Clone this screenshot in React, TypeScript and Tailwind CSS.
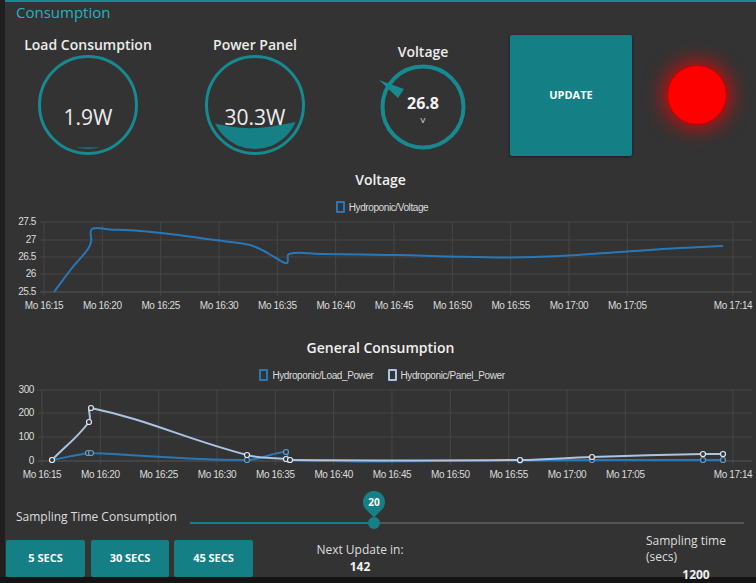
import React from 'react';

type Pt = [number, number];

// chart.js style spline (tension 0.4)
const spline = (pts: Pt[], tension = 0.4) => {
  const cps = pts.map((p, i) => {
    const p0 = pts[i - 1] || p;
    const p2 = pts[i + 1] || p;
    const d01 = Math.hypot(p[0] - p0[0], p[1] - p0[1]);
    const d12 = Math.hypot(p2[0] - p[0], p2[1] - p[1]);
    const sum = d01 + d12 || 1;
    const fa = (tension * d01) / sum;
    const fb = (tension * d12) / sum;
    return {
      prev: [p[0] - fa * (p2[0] - p0[0]), p[1] - fa * (p2[1] - p0[1])],
      next: [p[0] + fb * (p2[0] - p0[0]), p[1] + fb * (p2[1] - p0[1])],
    };
  });
  let d = `M${pts[0][0]},${pts[0][1]}`;
  for (let i = 0; i < pts.length - 1; i++) {
    const a = cps[i].next;
    const b = cps[i + 1].prev;
    const p = pts[i + 1];
    d += ` C${a[0].toFixed(1)},${a[1].toFixed(1)} ${b[0].toFixed(1)},${b[1].toFixed(1)} ${p[0]},${p[1]}`;
  }
  return d;
};

const timeLabels = [
  'Mo 16:15',
  'Mo 16:20',
  'Mo 16:25',
  'Mo 16:30',
  'Mo 16:35',
  'Mo 16:40',
  'Mo 16:45',
  'Mo 16:50',
  'Mo 16:55',
  'Mo 17:00',
  'Mo 17:05',
];

const voltagePts: Pt[] = [
  [54, 292], [72, 268], [88, 249], [91, 242], [92, 229], [110, 229.5], [140, 231],
  [170, 234], [200, 238], [230, 242], [250, 245], [262, 250], [276, 258], [287, 263],
  [289, 254], [320, 254], [360, 254.5], [400, 255], [450, 256.5], [512, 257.5],
  [560, 256], [620, 252], [680, 248], [723, 246],
];

const panelPts: Pt[] = [
  [52, 460], [89, 422], [91, 408], [247, 455], [286, 459], [290, 460], [520, 460],
  [592, 457], [703, 454], [723, 454],
];

const loadPts: Pt[] = [
  [52, 460], [88, 453], [91, 453], [247, 460], [286, 452], [289, 460], [520, 460.5],
  [592, 460], [703, 460], [723, 460],
];

const chartFont = "'Liberation Sans', Arial, sans-serif";

const Grid = ({ x0, ys }: { x0: number; ys: number[] }) => (
  <g>
    {ys.map((y, i) => (
      <line key={y} x1={x0 - 4} x2={752} y1={y} y2={y} stroke={i === ys.length - 1 ? '#575757' : '#464646'} strokeWidth={1} />
    ))}
    {timeLabels.map((_, i) => (
      <line key={i} x1={x0 + i * 58.33} x2={x0 + i * 58.33} y1={ys[0]} y2={ys[ys.length - 1] + 4} stroke="#464646" strokeWidth={1} />
    ))}
    <line x1={733} x2={733} y1={ys[0]} y2={ys[ys.length - 1] + 4} stroke="#464646" strokeWidth={1} />
  </g>
);

const XLabels = ({ x0, y }: { x0: number; y: number }) => (
  <g fontFamily={chartFont} fontSize={10} fill="#dcdcdc" letterSpacing={-0.4} textAnchor="middle">
    {timeLabels.map((l, i) => (
      <text key={l} x={x0 + i * 58.33} y={y}>
        {l}
      </text>
    ))}
    <text x={733} y={y}>Mo 17:14</text>
  </g>
);

const LegendBox = ({ color }: { color: string }) => (
  <span className="inline-block w-[9px] h-[12px] border-2 rounded-[1px]" style={{ borderColor: color }} />
);

export default function App() {
  return (
    <div className="w-[756px] h-[583px] bg-[#141414] flex overflow-hidden font-['Open_Sans',sans-serif]">
      <div className="w-[5px] h-[577px] bg-[#1f1f1f]" />
      <div className="flex-1 h-[577px] bg-[#333333] border-t-2 border-[#178a8f] flex flex-col relative">
        {/* Header */}
        <div className="h-[20px] pl-[11px] text-[15px] leading-[20px] text-[#22b4c0]">Consumption</div>

        {/* Gauges row */}
        <div className="h-[138px] flex items-start">
          <div className="w-[166px] flex flex-col items-center">
            <div className="mt-[13px] text-[14px] leading-[20px] font-semibold text-[#ececec]">Load Consumption</div>
            <svg width="100" height="100" viewBox="0 0 100 100">
              <defs>
                <clipPath id="inA">
                  <circle cx="50" cy="50" r="44" />
                </clipPath>
              </defs>
              <circle cx="50" cy="50" r="48.5" fill="none" stroke="#168a90" strokeWidth="3" />
              <path d="M0,93 C30,92 60,93 100,92 L100,100 L0,100 Z" fill="#158085" clipPath="url(#inA)" />
              <text x="50" y="70" textAnchor="middle" fontSize="21" fill="#ececec" fontFamily="'Open Sans', sans-serif">
                1.9W
              </text>
            </svg>
          </div>
          <div className="w-[168px] flex flex-col items-center">
            <div className="mt-[13px] text-[14px] leading-[20px] font-semibold text-[#ececec]">Power Panel</div>
            <svg width="100" height="100" viewBox="0 0 100 100">
              <defs>
                <clipPath id="inB">
                  <circle cx="50" cy="50" r="44" />
                </clipPath>
              </defs>
              <circle cx="50" cy="50" r="48.5" fill="none" stroke="#168a90" strokeWidth="3" />
              <path d="M0,66 C20,71 35,74 52,73 C68,72 82,68 100,66 L100,100 L0,100 Z" fill="#158085" clipPath="url(#inB)" />
              <text x="50" y="70" textAnchor="middle" fontSize="21" fill="#ececec" fontFamily="'Open Sans', sans-serif">
                30.3W
              </text>
            </svg>
          </div>
          <div className="w-[168px] flex flex-col items-center">
            <div className="mt-[21px] text-[14px] leading-[18px] font-semibold text-[#ececec]">Voltage</div>
            <svg width="90" height="90" viewBox="0 0 90 90" className="mt-[1px]">
              <circle cx="45" cy="45" r="40.5" fill="none" stroke="#168a90" strokeWidth="4" />
              <polygon points="1,18 26,27 20,36" fill="#168a90" />
              <text x="45" y="47" textAnchor="middle" fontSize="16" fontWeight="700" fill="#f2f2f2" fontFamily="'Open Sans', sans-serif">
                26.8
              </text>
              <text x="45" y="61" textAnchor="middle" fontSize="8" fill="#e0e0e0" fontFamily="'Open Sans', sans-serif">
                V
              </text>
            </svg>
          </div>
          <button className="ml-[3px] mt-[13px] w-[122px] h-[121px] bg-[#148086] rounded-[2px] shadow-[0_1px_3px_rgba(0,0,0,0.5)] text-white text-[11px] font-bold">
            UPDATE
          </button>
          <div className="ml-[35px] mt-[43px] w-[60px] h-[60px] rounded-full bg-[#ff0000] border border-[#c80000] shadow-[0_0_18px_6px_rgba(255,0,0,0.6)]" />
        </div>

        {/* Voltage chart */}
        <div className="mt-[10px] h-[20px] text-center text-[14px] leading-[20px] font-semibold text-[#f0f0f0]">Voltage</div>
        <div className="mt-[11px] h-[12px] flex items-center justify-center gap-[4px] pl-[3px] font-['Liberation_Sans',Arial,sans-serif] text-[10px] tracking-[-0.4px] text-[#dcdcdc]">
          <LegendBox color="#2878b8" />
          <span>Hydroponic/Voltage</span>
        </div>
        <svg width="751" height="102" viewBox="5 213 751 102" className="block">
          <Grid x0={44} ys={[222, 240, 257, 274, 292]} />
          <g fontFamily={chartFont} fontSize={10} fill="#dcdcdc" letterSpacing={-0.4} textAnchor="end">
            <text x={36} y={225}>27.5</text>
            <text x={36} y={243}>27</text>
            <text x={36} y={260}>26.5</text>
            <text x={36} y={277}>26</text>
            <text x={36} y={295}>25.5</text>
          </g>
          <XLabels x0={44} y={309} />
          <path d={spline(voltagePts)} fill="none" stroke="#2878b8" strokeWidth={2} />
        </svg>

        {/* General consumption chart */}
        <div className="mt-[23px] h-[20px] text-center text-[14px] leading-[20px] font-semibold text-[#f0f0f0]">General Consumption</div>
        <div className="mt-[11px] h-[12px] flex items-center justify-center gap-[4px] pl-[3px] font-['Liberation_Sans',Arial,sans-serif] text-[10px] tracking-[-0.4px] text-[#dcdcdc]">
          <LegendBox color="#2878b8" />
          <span className="mr-[10px]">Hydroponic/Load_Power</span>
          <LegendBox color="#a9c4e4" />
          <span>Hydroponic/Panel_Power</span>
        </div>
        <svg width="751" height="101" viewBox="5 381 751 101" className="block">
          <Grid x0={42} ys={[390, 413, 437, 461]} />
          <g fontFamily={chartFont} fontSize={10} fill="#dcdcdc" letterSpacing={-0.4} textAnchor="end">
            <text x={34} y={393}>300</text>
            <text x={34} y={416}>200</text>
            <text x={34} y={440}>100</text>
            <text x={34} y={464}>0</text>
          </g>
          <XLabels x0={42} y={478} />
          <path d={spline(loadPts)} fill="none" stroke="#2878b8" strokeWidth={2} />
          <path d={spline(panelPts)} fill="none" stroke="#a9c4e4" strokeWidth={2} />
          {loadPts.map(([x, y], i) => (
            <circle key={'l' + i} cx={x} cy={y} r={2.5} fill="#333" stroke="#5d9ccf" strokeWidth={1.2} />
          ))}
          {panelPts.map(([x, y], i) => (
            <circle key={'p' + i} cx={x} cy={y} r={2.5} fill="#333" stroke="#dfe8f3" strokeWidth={1.2} />
          ))}
        </svg>

        {/* Slider */}
        <div className="h-[53px] flex">
          <div className="w-[185px] pl-[11px] pt-[26px] text-[12px] leading-[18px] text-[#dedede]">Sampling Time Consumption</div>
          <div className="relative w-[554px]">
            <div className="mt-[40px] h-[2px] flex">
              <div className="w-[184px] bg-[#158085]" />
              <div className="flex-1 bg-[#555555]" />
            </div>
            <div className="absolute left-[178px] top-[35px] w-[12px] h-[12px] rounded-full bg-[#158085]" />
            <div className="absolute left-[173px] top-[9px] w-[22px] h-[22px] rounded-full rounded-br-[2px] rotate-45 bg-[#158085]" />
            <div className="absolute left-[173px] top-[9px] w-[22px] h-[22px] flex items-center justify-center text-white text-[10px] font-bold">
              20
            </div>
          </div>
        </div>

        {/* Buttons row */}
        <div className="mt-[5px] h-[37px] flex pl-[1px]">
          <button className="w-[79px] h-[37px] bg-[#148086] rounded-[2px] text-white text-[11px] font-bold">5 SECS</button>
          <button className="ml-[6px] w-[78px] h-[37px] bg-[#148086] rounded-[2px] text-white text-[11px] font-bold">30 SECS</button>
          <button className="ml-[5px] w-[79px] h-[37px] bg-[#148086] rounded-[2px] text-white text-[11px] font-bold">45 SECS</button>
          <div className="w-[214px] flex flex-col items-center pt-[1px]">
            <div className="text-[12px] leading-[18px] text-[#dedede]">Next Update in:</div>
            <div className="text-[12px] leading-[16px] font-bold text-[#f0f0f0]">142</div>
          </div>
          <div className="ml-[179px] w-[100px] flex flex-col -mt-[8px]">
            <div className="text-[12px] leading-[17px] text-[#dedede]">Sampling time</div>
            <div className="text-[12px] leading-[16px] text-[#dedede]">(secs)</div>
            <div className="text-center text-[12px] leading-[20px] font-bold text-[#f0f0f0]">1200</div>
          </div>
        </div>
      </div>
    </div>
  );
}
